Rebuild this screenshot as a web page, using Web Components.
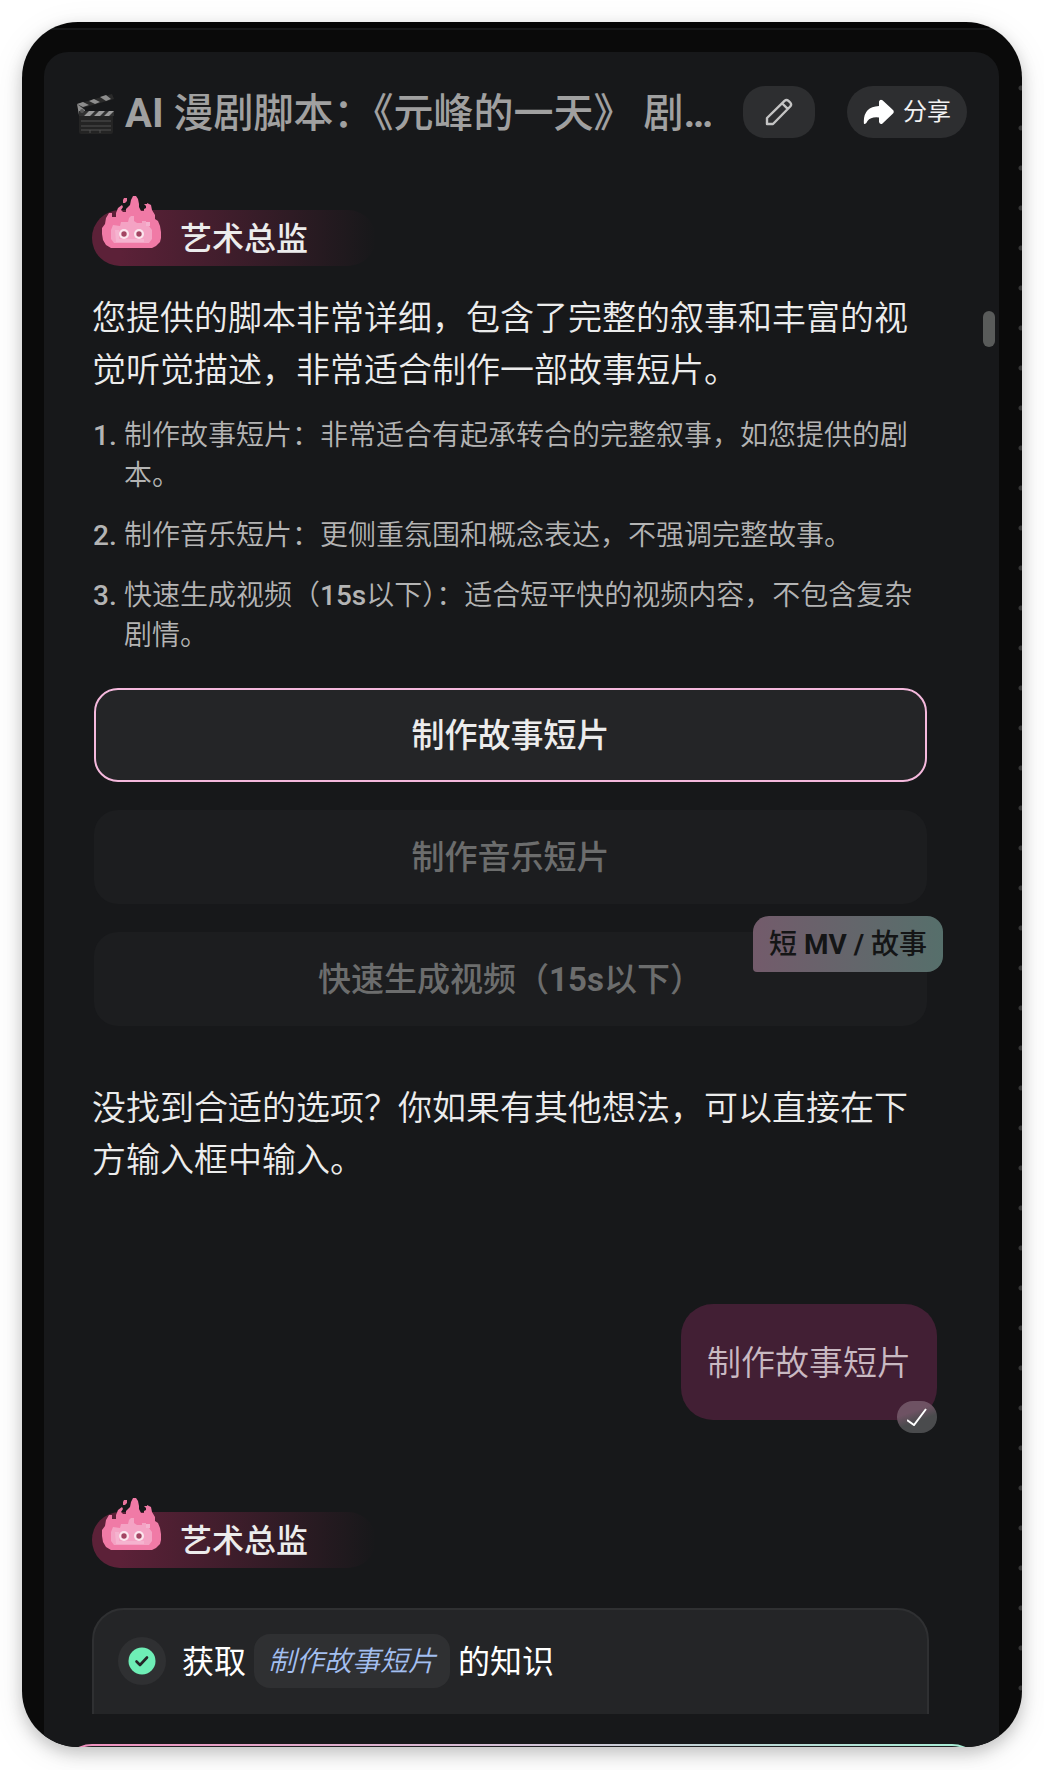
<!DOCTYPE html>
<html lang="zh-CN">
<head>
<meta charset="utf-8">
<meta name="viewport" content="width=device-width, initial-scale=1">
<title>AI 漫剧脚本</title>
<style>
  body {
    margin: 0;
    background: #fff;
    font-family: Roboto, "Noto Sans CJK SC", sans-serif;
    color: #ececec;
  }
</style>
</head>
<body>
<app-window>
  <chat-header><b>AI</b> 漫剧脚本：《元峰的一天》 剧<b>…</b></chat-header>
  <chat-thread>
    <role-badge>艺术总监</role-badge>
    <chat-text>您提供的脚本非常详细，包含了完整的叙事和丰富的视觉听觉描述，非常适合制作一部故事短片。</chat-text>
    <note-list>
      <note-item number="1.">制作故事短片：非常适合有起承转合的完整叙事，如您提供的剧本。</note-item>
      <note-item number="2.">制作音乐短片：更侧重氛围和概念表达，不强调完整故事。</note-item>
      <note-item number="3.">快速生成视频（<b>15s</b>以下）：适合短平快的视频内容，不包含复杂剧情。</note-item>
    </note-list>
    <option-group>
      <option-button selected>制作故事短片</option-button>
      <option-button>制作音乐短片</option-button>
      <option-button>快速生成视频（<b>15s</b>以下）<span slot="tag">短 <b>MV /</b> 故事</span></option-button>
    </option-group>
    <chat-text class="hint">没找到合适的选项？你如果有其他想法，可以直接在下方输入框中输入。</chat-text>
    <user-bubble>制作故事短片</user-bubble>
    <role-badge class="second">艺术总监</role-badge>
    <task-card><span>获取</span><em slot="topic">制作故事短片</em><span slot="after">的知识</span></task-card>
  </chat-thread>
  <chat-composer></chat-composer>
</app-window>

<script>
const define = (name, markup, setup) => {
  const template = document.createElement('template');
  template.innerHTML = markup;
  customElements.define(name, class extends HTMLElement {
    connectedCallback() {
      if (this.shadowRoot) return;
      this.attachShadow({ mode: 'open' }).append(template.content.cloneNode(true));
      if (setup) setup(this, this.shadowRoot);
    }
  });
};

define('app-window', `
  <style>
    :host { display: block; box-sizing: border-box; height: 100vh; min-height: 600px; padding: 22px 22px 23px; overflow: hidden; }
    .frame {
      box-sizing: border-box; height: 100%; padding: 30px 23px 0 22px; overflow: hidden;
      border-radius: 56px;
      background:
        linear-gradient(#050505 6px, #161718 6px, #161718 8px, transparent 8px) 0 0 / 100% 30px no-repeat,
        radial-gradient(circle at 3px 20px, #333 2px, transparent 3px) right 0 top 46px / 4px 40px repeat-y,
        #0a0a0a;
      box-shadow: 0 6px 16px rgba(0,0,0,.2), 0 8px 36px rgba(0,0,0,.08);
    }
    main {
      height: 100%; display: flex; flex-direction: column; position: relative;
      background: #17181a; border-radius: 24px 24px 0 0;
    }
    .thumb { position: absolute; right: 4px; top: 259px; width: 12px; height: 36px; border-radius: 6px; background: #595b5a; }
  </style>
  <div class="frame"><main><slot></slot><div class="thumb"></div></main></div>`);

define('chat-header', `
  <style>
    :host { display: flex; align-items: center; gap: 32px; padding: 34px 32px 0; color: #a0a0a0; }
    h1 { flex: 1; min-width: 0; margin: 0; padding-top: 4px; display: flex; align-items: center; gap: 9px; font-size: 40px; line-height: 48px; font-weight: 500; white-space: nowrap; overflow: hidden; }
    ::slotted(b) { font-weight: 700; }
    h1 svg { flex: none; }
    button { font: inherit; height: 52px; border: 0; border-radius: 26px; background: #2d2e30; display: flex; align-items: center; justify-content: center; padding: 0 16px; }
    .edit { width: 72px; border-radius: 22px; color: #c4c4c4; }
    .share { gap: 9px; color: #f2f2f2; font-size: 24px; line-height: 32px; }
  </style>
  <h1>
    <svg width="40" height="40" viewBox="0 0 40 40" aria-hidden="true">
      <rect x="3" y="17" width="34" height="23" rx="2" fill="#242424"/>
      <path d="M1 10 36 0 38 5 3 15Z" fill="#2a2a2a"/>
      <path d="M1 10 7 8 13 11 7 13ZM13 7 18 5 24 8 19 10ZM24 3 30 1 35 5 30 7Z" fill="#8d8d8d"/>
      <path d="M1 10 9 16 8 20 3 21Z" fill="#8d8d8d"/>
      <path d="M3 17H38V22H3Z" fill="#303030"/>
      <path d="M8 22 13 17H19L14 22ZM18 22 23 17H29L24 22ZM28 22 33 17H38L33 22Z" fill="#999"/>
      <path d="M5 27H35M5 32H35M5 36H35M14 36V39M24 36V39" stroke="#515151" fill="none"/>
      <circle cx="6" cy="17" r="2" fill="#555"/>
    </svg>
    <span><slot></slot></span>
  </h1>
  <button class="edit" aria-label="编辑">
    <svg width="28" height="28" viewBox="0 0 28 28" fill="none" stroke="currentColor" stroke-width="2.4" stroke-linejoin="round"><path d="M2 26V20L19.500 2.800Q21.500 1 23.500 2.800L25.200 4.500Q27 6.500 25.200 8.500L8 26ZM17.300 5.500 22.500 10.700" /></svg>
  </button>
  <button class="share">
    <svg width="31" height="26" viewBox="0 0 31 26" fill="#fff"><path d="M16 2.500Q17-.200 19.500 1.200L30 11Q31.500 12.500 30 14.500L19.500 24.500Q17 26 16 23V18.500Q8 17.500 4.500 22Q2.500 26.500.900 24.500Q-.300 8 16 7Z"/></svg>
    分享
  </button>`);

define('chat-thread', `
  <style>
    :host { display: block; flex: 1; min-height: 0; overflow: hidden; padding: 72px 70px 0 48px; }
    ::slotted(.hint) { margin-top: 56px; }
    ::slotted(.second) { margin-top: 92px; }
  </style>
  <slot></slot>`);

define('role-badge', `
  <style>
    :host { display: flex; }
    .pill { display: flex; align-items: flex-end; gap: 18px; box-sizing: border-box; width: 284px; height: 56px; padding-left: 10px; border-radius: 28px; background: linear-gradient(90deg, #5c2138 10%, rgba(92,33,56,0)); }
    svg { flex: none; margin-bottom: 18px; }
    strong { font-size: 32px; line-height: 54px; font-weight: 500; }
  </style>
  <div class="pill">
    <svg width="60" height="52" viewBox="0 0 60 52" aria-hidden="true">
      <path fill="#f07aa6" d="M7 17H10V21H14V17L16 12 20 9 21 11 19 14 21 16H24V13L28 9 29 4 31 0H34L36 3 37 8V11L39 15H42V13L44 12V10L42 8H45V7L49 9 50 14 53 19V23L56 25 58 30 59 36V42L58 46 54 50 50 52H9L4 49 1 44 0 38V32L3 28 4 22Z"/>
      <path fill="#e8739c" d="M22 2H25V5L23 7H21V4Z"/>
      <path fill="#f4a3c4" d="M29 20H32V25L35 27H40V25H44V30H47L50 34V43L47 47H12L9 43V34L11 29 18 30 19 26H26L27 22Z"/>
      <path fill="#f5b3cf" d="M44 26H48V30H44ZM13 34H17V43H42V46H14Z"/>
      <g fill="#fbe6ee"><circle cx="22" cy="38" r="5"/><circle cx="37" cy="38" r="5"/></g>
      <g fill="#a34563"><circle cx="22" cy="38" r="2.700"/><circle cx="37" cy="38" r="2.700"/></g>
    </svg>
    <strong><slot></slot></strong>
  </div>`);

define('chat-text', `
  <style>
    :host { display: block; margin-top: 26px; }
    p { margin: 0; font-size: 34px; line-height: 52px; font-weight: 350; }
  </style>
  <p><slot></slot></p>`);

define('note-list', `
  <style>:host { display: flex; flex-direction: column; gap: 20px; margin-top: 20px; padding: 0 1px; }</style>
  <slot></slot>`);

define('note-item', `
  <style>
    :host { display: flex; font-size: 28px; line-height: 40px; font-weight: 350; color: #b4b4b4; }
    .n { flex: none; width: 31px; font-weight: 500; }
    ::slotted(b) { font-weight: 500; }
  </style>
  <span class="n"></span><div><slot></slot></div>`,
  (el, root) => { root.querySelector('.n').textContent = el.getAttribute('number'); });

define('option-group', `
  <style>:host { display: flex; flex-direction: column; gap: 28px; margin-top: 32px; padding: 0 2px; }</style>
  <slot></slot>`);

define('option-button', `
  <style>
    :host { display: block; position: relative; }
    button { display: block; box-sizing: border-box; width: 100%; height: 94px; padding: 2px 0 0; border: 2px solid transparent; border-radius: 24px; background: #1c1d1f; background-clip: border-box; color: #6c6d6d; font: 500 33px/48px Roboto, "Noto Sans CJK SC", sans-serif; }
    :host([selected]) button { border-color: #f5b9dd; background: #242527; color: #ececec; }
    ::slotted(b) { font-weight: 700; }
    ::slotted([slot="tag"]) { position: absolute; right: -16px; top: -16px; padding: 2px 16px 0; font-size: 28px; line-height: 54px; font-weight: 500; color: #141516; border-radius: 16px 16px 16px 4px; background: linear-gradient(90deg, #735b6b, #566f6b); }
  </style>
  <button><slot></slot></button><slot name="tag"></slot>`);

define('user-bubble', `
  <style>
    :host { display: flex; justify-content: flex-end; margin: 118px -8px 0 0; }
    .bubble { position: relative; padding: 33px 26px 31px; border-radius: 32px; background: #421f34; color: #c9b9c2; font-size: 34px; line-height: 52px; font-weight: 350; }
    .done { position: absolute; right: 0; bottom: -13px; width: 40px; height: 32px; border-radius: 16px; background: linear-gradient(160deg, #6e5263 35%, #4a4b4d 60%); display: flex; align-items: center; justify-content: center; }
  </style>
  <div class="bubble"><slot></slot>
    <span class="done"><svg width="20" height="18" viewBox="0 0 20 18" fill="none" stroke="#fff" stroke-width="2"><path d="M0 12 7 17 19 1"/></svg></span>
  </div>`);

define('task-card', `
  <style>
    :host { display: flex; align-items: flex-start; box-sizing: border-box; height: 140px; margin-top: 40px; padding: 24px 24px 34px; border: 2px solid #2f3032; border-radius: 32px; background: #242527; color: #fff; font-size: 32px; line-height: 48px; white-space: nowrap; }
    .row { display: flex; align-items: center; }
    .icon { width: 48px; height: 48px; margin-right: 16px; border-radius: 50%; background: #2f3032; display: flex; align-items: center; justify-content: center; }
    .chip { margin: 0 8px; padding: 2px 14px 0; border-radius: 16px; background: #2f3032; font-size: 28px; line-height: 52px; font-weight: 350; color: #a3bff0; }
    ::slotted(span) { padding-top: 2px; }
  </style>
  <div class="row">
    <span class="icon"><svg width="28" height="28" viewBox="0 0 28 28"><circle cx="14" cy="14" r="13.500" fill="#6eeeb6"/><path d="M8.500 14.500 12 18 19 10.500" fill="none" stroke="#242527" stroke-width="2.600" stroke-linecap="round" stroke-linejoin="round"/></svg></span>
    <slot></slot><span class="chip"><slot name="topic"></slot></span><slot name="after"></slot>
  </div>`);

define('chat-composer', `
  <style>
    :host { display: block; flex: none; height: 3px; margin-top: 30px; padding: 0 15px 0 16px; overflow: hidden; }
    div { height: 96px; border: 2px solid transparent; border-radius: 32px; background: linear-gradient(#242527, #242527) padding-box, linear-gradient(90deg, #f28fbd, #d5c3d8 50%, #a6f0d6) border-box; }
  </style>
  <div></div>`);
</script>
</body>
</html>
